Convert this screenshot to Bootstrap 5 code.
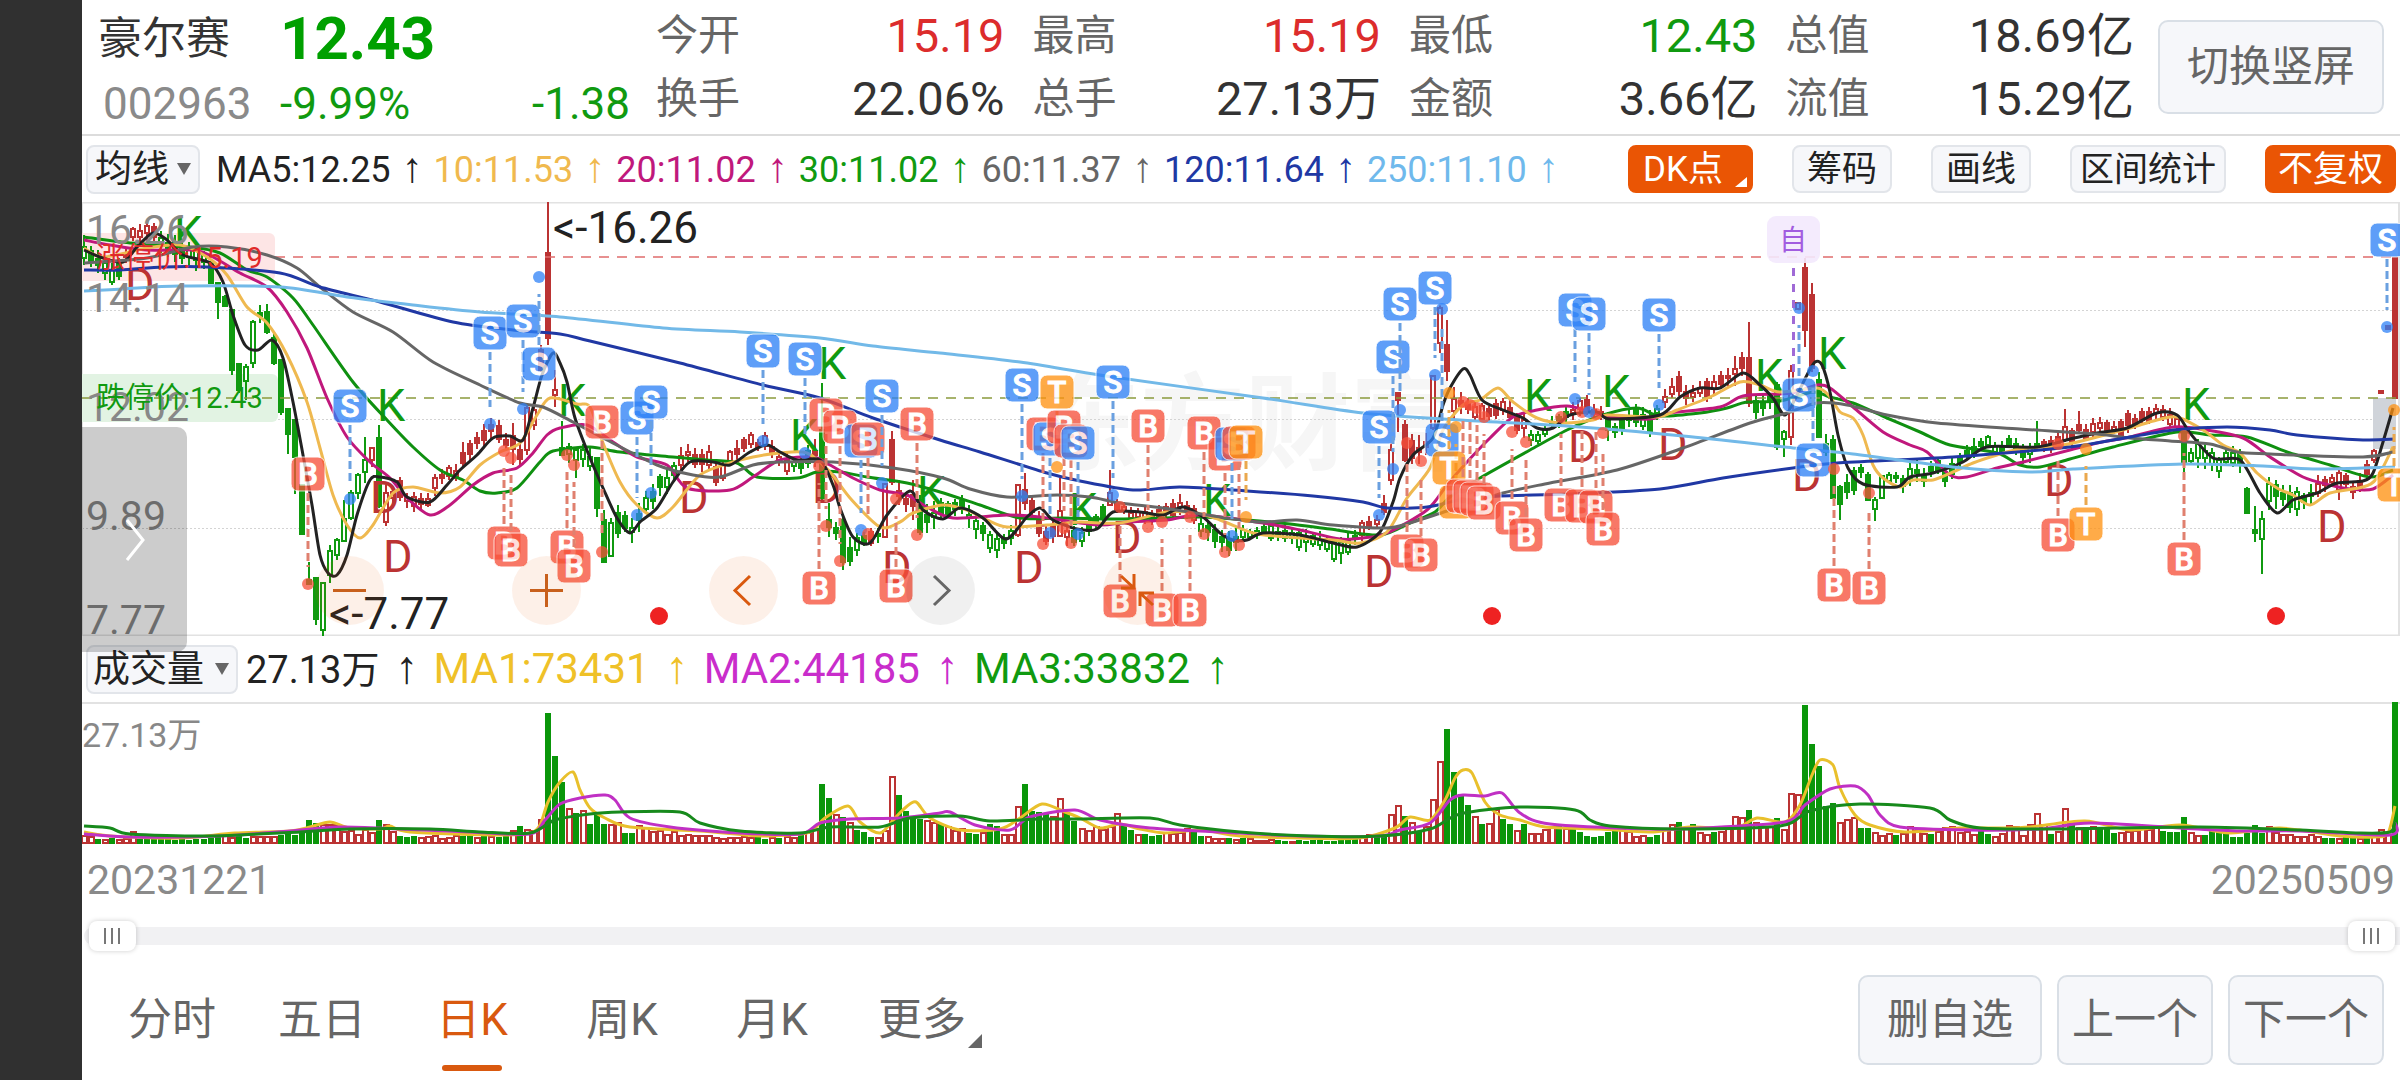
<!DOCTYPE html>
<html lang="zh-CN">
<head>
<meta charset="utf-8">
<meta name="viewport" content="width=device-width, initial-scale=1">
<title>豪尔赛 002963 日K</title>
<link href="https://cdn.jsdelivr.net/npm/bootstrap@5.3.0/dist/css/bootstrap.min.css" rel="stylesheet">
<style>
body{font-family:Roboto,"Noto Sans CJK SC",sans-serif;background:#fff;color:#333;line-height:1}
.side-strip{width:82px;background:#303030}
.quote-head{height:136px;border-bottom:2px solid #dcdcdc;padding:0 16px 0 16px}
.stock-id{width:532px;margin-right:26px}
.stock-name{font-size:44px;width:182px}
.stock-code{font-size:44px;width:182px;color:#8a8a8a;padding-left:5px}
.last-price{font-size:60px;font-weight:700;line-height:62px;color:#00a000}
.chg{font-size:44px}
.up-c{color:#dc2c2c}.dn-c{color:#109a10}
.qgrid{gap:0 28px}
.qrow{height:63px}
.qlabel{font-size:42px;color:#666}
.qval{font-size:47px}
.soft-btn{background:#f6f7fa;border:2px solid #d9dfe6;color:#666;font-size:42px;border-radius:10px;line-height:1;padding:0 13px}
.wide-btn{padding:0 27px}
.head-btn{height:94px}
.tool-row{height:66px;padding:0 4px 0 4px}
.pick{position:relative;height:49px;background:#f6f7fa;border:2px solid #e2e5ea;border-radius:8px}
.pick select{appearance:none;border:0;background:none;color:#222;font-size:37px;height:45px;line-height:45px;padding:0 29px 0 7px;outline:0}
.pick .pick-vol{padding:0 32px 0 5px}
.pick::after{content:"";position:absolute;right:7px;top:16px;border:7px solid transparent;border-top:12px solid #666;border-bottom:0;pointer-events:none}
.ma-txt{font-size:36px;white-space:nowrap}
.ma-txt i,.vol-txt i{font-family:"Liberation Sans",sans-serif;font-style:normal;font-size:42px;line-height:36px;display:inline-block;text-align:center;width:43px}
.vol-txt{font-size:42px;white-space:nowrap}
.vol-txt i{width:54px;font-size:46px}
.vol-now{font-size:38px}
.tag-row{gap:39px}
.tag-btn{height:48px;font-size:35px;line-height:1;padding:0 13px;background:#f6f7fa;border:2px solid #e2e5ea;border-radius:8px;color:#222}
.tag-long{padding:0 8px;font-size:34px}
.tag-tight{padding:0 11px}
.tag-on{background:#ea5504;border-color:#ea5504;color:#fff;position:relative}
.tag-dk{padding-right:28px}
.tag-dk::after{content:"";position:absolute;right:4px;bottom:4px;border-left:12px solid transparent;border-bottom:10px solid #fff}
svg{display:block}
.chart-svg{width:100%;height:auto}
.drawer-btn{position:absolute;left:0;top:225px;width:105px;height:225px;border:0;border-radius:0 10px 10px 0;background:rgba(0,0,0,.2);z-index:2;padding:0 0 0 14px}
.zoom-bar{position:absolute;left:233px;top:354px;gap:128px}
.round-btn{width:69px;height:69px;border:0;border-radius:50%;background:rgba(234,85,4,.09);padding:0}
.round-btn:disabled{background:rgba(0,0,0,.06)}
.date-row{height:76px;font-size:41px;color:#8a8a8a;padding:15px 5px 0 5px}
.span-wrap{position:relative;height:30px}
.span-wrap::before{content:"";position:absolute;left:2px;right:0;top:6px;height:18px;border-radius:9px 0 0 9px;background:#f1f1f3}
.span-wrap input{appearance:none;position:absolute;left:7px;width:calc(100% - 12px);height:30px;background:none;margin:0;pointer-events:none}
.span-wrap input::-webkit-slider-thumb{appearance:none;pointer-events:auto;width:47px;height:30px;border:0;border-radius:8px;box-shadow:0 0 5px rgba(0,0,0,.2);background:linear-gradient(90deg,#777 2px,transparent 2px 7px,#777 7px 9px,transparent 9px 14px,#777 14px) 15px 7px/16px 16px no-repeat #fff}
.foot-row{margin-top:24px;padding:0 16px 0 15px}
.foot-btns{gap:15px}
.tab-a{width:150px;text-align:center;font-size:44px;color:#666;text-decoration:none;line-height:90px;position:relative}
.tab-a.active{color:#d9590f}
.tab-a.active::after{content:"";position:absolute;left:45px;width:60px;height:6px;border-radius:3px;bottom:-6px;background:#d9590f}
.tab-more::after{content:"";position:absolute;right:15px;bottom:17px;border-left:14px solid transparent;border-bottom:14px solid #666}
.foot-row .soft-btn{height:90px}
</style>
</head>
<body class="d-flex min-vh-100">
<aside class="side-strip flex-shrink-0"></aside>
<main class="flex-grow-1 overflow-hidden">
  <header class="quote-head d-flex">
    <div class="stock-id flex-shrink-0">
      <div class="d-flex align-items-center pt-2"><span class="stock-name">豪尔赛</span><span class="last-price">12.43</span></div>
      <div class="d-flex align-items-center pt-2 mt-1"><span class="stock-code">002963</span><span class="chg dn-c">-9.99%</span><span class="chg dn-c ms-auto">-1.38</span></div>
    </div>
    <div class="qgrid row row-cols-4 flex-grow-1 flex-nowrap g-0 pt-1">
      <div class="flex-fill w-25"><div class="qrow d-flex justify-content-between align-items-center"><span class="qlabel">今开</span><span class="qval up-c">15.19</span></div><div class="qrow d-flex justify-content-between align-items-center"><span class="qlabel">换手</span><span class="qval">22.06%</span></div></div>
      <div class="flex-fill w-25"><div class="qrow d-flex justify-content-between align-items-center"><span class="qlabel">最高</span><span class="qval up-c">15.19</span></div><div class="qrow d-flex justify-content-between align-items-center"><span class="qlabel">总手</span><span class="qval">27.13万</span></div></div>
      <div class="flex-fill w-25"><div class="qrow d-flex justify-content-between align-items-center"><span class="qlabel">最低</span><span class="qval dn-c">12.43</span></div><div class="qrow d-flex justify-content-between align-items-center"><span class="qlabel">金额</span><span class="qval">3.66亿</span></div></div>
      <div class="flex-fill w-25"><div class="qrow d-flex justify-content-between align-items-center"><span class="qlabel">总值</span><span class="qval">18.69亿</span></div><div class="qrow d-flex justify-content-between align-items-center"><span class="qlabel">流值</span><span class="qval">15.29亿</span></div></div>
    </div>
    <button type="button" class="soft-btn wide-btn head-btn align-self-center flex-shrink-0 ms-4">切换竖屏</button>
  </header>

  <section class="tool-row d-flex align-items-center">
    <label class="pick me-3" aria-label="主图指标"><select><option>均线</option></select></label>
    <div class="ma-txt d-flex">
      <span style="color:#222">MA5:12.25<i>↑</i></span><span style="color:#f0b94e">10:11.53<i>↑</i></span><span style="color:#c0187c">20:11.02<i>↑</i></span><span style="color:#109a10">30:11.02<i>↑</i></span><span style="color:#666">60:11.37<i>↑</i></span><span style="color:#2038a4">120:11.64<i>↑</i></span><span style="color:#6fb9ec">250:11.10<i>↑</i></span>
    </div>
    <div class="tag-row d-flex ms-auto">
      <button type="button" class="tag-btn tag-on tag-dk">DK点</button>
      <button type="button" class="tag-btn">筹码</button>
      <button type="button" class="tag-btn">画线</button>
      <button type="button" class="tag-btn tag-long">区间统计</button>
      <button type="button" class="tag-btn tag-on tag-tight">不复权</button>
    </div>
  </section>

  <section class="position-relative">
    <svg id="price" class="chart-svg" viewBox="82 202 2318 434" role="img" aria-label="日K线图"></svg>
    <div class="zoom-bar d-flex">
      <button type="button" class="round-btn" aria-label="缩小"><svg width="69" height="69"><path d="M18 34.500H51" stroke="#c8601c" stroke-width="3"/></svg></button>
      <button type="button" class="round-btn" aria-label="放大"><svg width="69" height="69"><path d="M18 34.500H51M34.500 18V51" stroke="#c8601c" stroke-width="3"/></svg></button>
      <button type="button" class="round-btn" aria-label="左移"><svg width="69" height="69"><path d="M41 20L26 34.500L41 49" fill="none" stroke="#d9590f" stroke-width="3"/></svg></button>
      <button type="button" class="round-btn" disabled aria-label="右移"><svg width="69" height="69"><path d="M28 20L43 34.500L28 49" fill="none" stroke="#666" stroke-width="3"/></svg></button>
      <button type="button" class="round-btn" aria-label="收起"><svg width="69" height="69"><path d="M18 20L31 32M18 32H31V18M50 49L37 37M51 37H37V50" fill="none" stroke="#d9590f" stroke-width="3"/></svg></button>
    </div>
    <button type="button" class="drawer-btn" aria-label="展开"><svg width="60" height="46" viewBox="0 0 60 46"><path d="M31 3L47 23L31 43" fill="none" stroke="#fff" stroke-width="3"/></svg></button>
  </section>

  <section class="tool-row d-flex align-items-center">
    <label class="pick me-2" aria-label="副图指标"><select class="pick-vol"><option>成交量</option></select></label>
    <div class="vol-txt d-flex align-items-center">
      <span class="vol-now" style="color:#222">27.13万<i>↑</i></span><span style="color:#efc128">MA1:73431<i>↑</i></span><span style="color:#c92dcb">MA2:44185<i>↑</i></span><span style="color:#109a10">MA3:33832<i>↑</i></span>
    </div>
  </section>
  <svg id="volume" class="chart-svg" viewBox="82 702 2318 143" role="img" aria-label="成交量图"></svg>

  <div class="date-row d-flex justify-content-between"><span>20231221</span><span>20250509</span></div>
  <div class="span-wrap"><input type="range" value="0" aria-label="起始"><input type="range" value="100" aria-label="结束"></div>

  <footer class="foot-row d-flex">
    <nav class="d-flex" aria-label="周期">
      <a class="tab-a" href="#">分时</a><a class="tab-a" href="#">五日</a><a class="tab-a active" href="#">日K</a><a class="tab-a" href="#">周K</a><a class="tab-a" href="#">月K</a><a class="tab-a tab-more" href="#">更多</a>
    </nav>
    <div class="foot-btns d-flex ms-auto">
      <button type="button" class="soft-btn wide-btn">删自选</button>
      <button type="button" class="soft-btn">上一个</button>
      <button type="button" class="soft-btn">下一个</button>
    </div>
  </footer>
</main>
<script src="https://cdn.jsdelivr.net/npm/bootstrap@5.3.0/dist/js/bootstrap.bundle.min.js"></script>
<script>
const RED='#bb3333',GRN='#109a10';
const nums=s=>s.trim().split(/\s+/).map(p=>p.split(',').map(v=>isNaN(v)?v:+v));
// smooth path through "x,y x,y ..."
function curve(s){
  const p=nums(s);let d=`M${p[0]}`;
  for(let i=0;i<p.length-1;i++){
    const a=p[i-1]||p[i],b=p[i],c=p[i+1],e=p[i+2]||c;
    d+=`C${b[0]+(c[0]-a[0])/7},${b[1]+(c[1]-a[1])/7} ${c[0]-(e[0]-b[0])/7},${c[1]-(e[1]-b[1])/7} ${c}`;
  }
  return d;
}
const line=(s,c,w=3)=>`<path d="${curve(s)}" fill="none" stroke="${c}" stroke-width="${w}" stroke-linejoin="round"/>`;
let seed=7;const rnd=()=>(seed=(seed*16807)%2147483647)/2147483647;
const N=330,X=i=>2395-(N-1-i)*7.024;

// calm stretches: x, middle, half range, colour
const calm=nums(`84,252,12,g 100,262,10,g 110,274,9,g 120,268,10,g 128,252,8,r 133,235,7,r 140,232,7,r 153,232,10,r 162,244,11,g 180,250,11,g 207,262,10,g
393,496,10,r 400,487,10,r 407,499,8,r 413,505,9,r 420,500,9,r 427,501,8,r 434,487,9,r 441,475,7,r 448,473,7,r 455,475,7,r 462,458,12,r 470,449,8,r 477,442,7,r 484,436,9,r 491,427,11,r 498,432,9,r 505,440,9,r 512,443,18,r 519,455,12,r
567,452,8,g 581,457,11,g 588,456,10,g 617,520,14,g 624,522,8,g 631,534,14,g 638,522,14,g 645,504,9,g 652,498,11,g 659,488,12,g 666,480,13,g 673,474,11,g 680,462,10,r 687,455,12,r 694,456,8,r 701,459,9,r 708,455,13,r 715,474,11,r 722,472,9,r 729,459,9,r 736,452,9,r 743,444,9,r 750,438,8,r 757,444,6,r 764,441,8,r 771,448,8,r 778,456,8,r 785,462,10,r 792,464,8,g 799,466,8,g 806,458,8,g 813,446,12,r
833,525,9,g 847,552,14,g 854,550,11,g 861,540,9,g 868,535,7,r 875,541,8,g 896,486,11,r 903,497,8,r 924,520,11,g 931,520,18,g 938,508,12,g 945,509,8,g 952,508,8,g 959,503,7,g 966,510,10,g 973,525,12,g 980,531,12,g 987,536,11,g 994,547,12,g 1001,547,8,g 1008,539,8,g
1029,504,10,r 1036,512,9,r 1043,534,12,r 1050,535,9,r 1064,528,9,r 1071,538,10,g 1078,538,9,g 1085,533,7,g 1092,524,8,g 1099,519,9,g 1106,510,8,g 1120,506,6,r 1127,513,7,r 1140,517,8,r 1150,517,8,r 1160,513,9,r 1170,509,8,r 1180,505,8,r 1190,510,7,r 1197,518,9,r 1204,530,9,g 1211,531,9,g 1225,545,10,g 1232,540,12,g 1245,532,7,g 1255,535,6,g 1265,528,7,g 1275,531,8,g 1290,537,7,g 1302,540,10,g 1315,537,7,g 1330,545,9,g 1337,552,12,g 1345,548,11,g 1356,537,7,g 1364,530,9,r 1370,524,7,r 1378,519,6,r 1385,502,13,r
1413,445,12,r 1420,452,13,r 1428,443,14,r 1456,400,14,r 1463,403,8,r 1470,407,8,r 1477,409,8,r 1487,415,7,r 1500,407,11,r 1507,405,10,r 1515,422,10,r 1522,424,10,r 1529,438,10,g 1537,439,8,g 1545,430,7,g 1552,424,8,g 1560,420,8,g 1568,414,8,g 1575,411,9,r 1582,405,8,r 1590,408,9,r 1600,412,8,r 1613,430,9,g 1625,422,8,g 1640,414,10,g 1652,424,12,g 1658,412,7,g 1664,399,9,r 1674,386,10,r 1681,382,11,r 1688,400,10,r 1700,388,9,r 1710,388,10,r 1717,382,9,r 1725,378,8,r 1735,370,12,r 1743,365,12,r 1757,410,14,g 1764,405,12,g 1771,400,9,g
1828,445,12,g 1849,490,14,g 1856,478,10,g 1863,471,7,g 1891,478,6,g 1898,478,7,g 1905,484,8,g 1912,470,11,g 1919,470,9,g 1926,478,7,g 1933,467,7,g 1940,467,9,g 1947,476,9,g 1955,464,9,g 1962,458,8,g 1970,449,9,g 1980,443,8,g 1990,444,7,g 2000,451,7,g 2010,441,7,g 2017,449,11,g 2025,454,8,g 2033,449,9,g 2047,444,6,r 2055,441,8,r 2072,435,8,r 2086,431,10,r 2100,428,8,r 2110,429,7,r 2120,428,9,r 2130,422,10,r 2140,418,8,r 2150,416,8,r 2157,410,7,r 2165,416,8,r 2175,419,8,r
2191,457,9,g 2198,455,12,g 2205,456,12,g 2212,459,9,g 2219,470,10,g 2227,456,10,g 2234,457,8,g 2240,460,9,g 2268,494,16,g 2275,495,12,g 2285,494,8,g 2296,503,14,g 2303,500,9,g 2310,494,8,g 2317,486,10,r 2325,484,9,r 2332,479,6,r 2338,484,14,r 2345,481,7,r 2352,489,10,r 2360,482,9,r 2367,470,8,r`);
// wide bars: x, high, low, body top, body bottom, kind (capital = filled)
const wide=nums(`211,262,283,262,283,G 217,283,319,283,302,G 224,295,307,297,306,G 232,310,375,310,370,G 239,364,393,364,390,G 246,364,400,367,381,g 253,320,368,322,363,g 260,305,323,313,316,G 266,304,334,312,332,G 274,334,365,338,363,G 281,360,415,360,412,G 288,409,454,409,434,G 294,420,494,420,457,G 302,485,534,485,534,G 308,562,585,580,584,G 316,578,625,578,619,G 323,582,636,583,630,g 330,545,583,551,575,g 337,538,560,540,555,g 344,500,542,519,541,g 351,490,520,493,518,g 358,473,499,475,493,g 365,437,483,460,472,g 372,447,467,448,460,r 379,425,508,438,506,G 386,485,526,493,522,r
526,405,455,408,450,r 532,407,430,410,425,r 539,345,372,350,370,R 546,202,345,253,338,R 553,370,407,390,395,r 560,421,455,448,455,G 574,447,478,450,460,g 595,458,517,458,508,G 602,510,562,520,562,G 610,518,556,523,556,g 819,383,500,430,498,G 826,503,537,520,527,G 840,516,570,520,562,G 882,483,538,484,537,r 889,431,485,440,482,R 910,480,520,495,506,R 917,495,535,500,532,G 1015,484,537,485,535,r 1022,473,510,490,503,R 1057,478,537,511,536,r 1113,470,506,493,505,r 1392,443,485,450,480,r 1399,392,432,393,400,R 1406,420,462,425,460,R 1435,375,430,376,428,r 1442,305,353,308,343,r 1449,320,381,345,371,R
1606,412,441,414,430,G 1750,322,407,358,403,R 1779,382,450,385,447,G 1786,430,457,432,439,g 1793,365,445,371,437,r 1800,303,310,303,309,r 1807,258,347,268,330,R 1814,283,372,295,368,R 1821,372,437,380,437,G 1835,435,498,440,498,G 1842,485,520,487,504,G 1870,472,501,475,500,G 1877,497,521,500,509,g 1884,475,498,476,498,g 2040,421,450,444,447,G 2065,409,442,427,440,r 2079,411,434,425,430,R 2184,431,472,432,462,G 2247,487,513,489,513,G 2254,506,542,530,533,G 2261,511,574,519,539,g 2374,449,463,451,460,r 2381,391,393,391,393,R 2388,326,329,326,329,R 2395,258,398,258,398,R`);
function bar(x,h,l,t,b,k){
  const c=/r/i.test(k)?RED:GRN,solid=k<'a';x=Math.round(x);
  return `<path d="M${x} ${h}V${solid?l:t}M${x} ${b}V${l}" stroke="${c}" stroke-width="2"/><rect x="${x-2}" y="${t}" width="4" height="${Math.max(b-t,2)}" fill="${solid?c:'#fff'}" stroke="${c}" stroke-width="2"/>`;
}
let bars='';
for(let i=0;i<N;i++){
  const x=X(i),w=wide.find(e=>Math.abs(e[0]-x)<3.55);
  if(w){bars+=bar(x,...w.slice(1));continue}
  let j=calm.findIndex(e=>e[0]>x);if(j<1)j=1;
  const a=calm[j-1],b=calm[j],f=Math.min(1,Math.max(0,(x-a[0])/(b[0]-a[0])));
  const m=a[1]+(b[1]-a[1])*f+rnd()*4-2,r=(a[2]+(b[2]-a[2])*f)*(.8+rnd()*.5);
  const col=f<.5?a[3]:b[3],k=rnd()<.5?col:col.toUpperCase();
  bars+=bar(x,Math.round(m-r),Math.round(m+r),Math.round(m-r*(.1+rnd()*.6)),Math.round(m+r*(.1+rnd()*.6)),k);
}
const ma=[
['84,237 130,243 190,247 220,253 247,270 267,277 293,298 313,325 353,382 387,420 413,447 440,470 463,480 480,491 497,493 517,488 540,462 553,451 590,447 620,452 673,457 707,460 737,463 757,477 797,478 817,472 840,472 867,477 907,483 940,492 980,505 1020,518 1063,518 1113,519 1163,518 1200,517 1247,520 1290,524 1330,529 1380,535 1410,523 1435,512 1450,497 1480,478 1530,450 1567,430 1603,415 1637,408 1660,416 1700,413 1727,408 1747,402 1780,401 1813,392 1830,397 1853,403 1887,418 1920,432 1950,445 1997,453 2020,465 2040,467 2070,459 2113,447 2177,432 2210,435 2247,437 2287,452 2330,465 2370,477 2393,470','#0f9010'],
['84,240 110,245 147,250 193,250 213,257 240,273 267,287 287,312 307,348 327,398 347,437 370,462 390,478 407,498 430,515 450,505 473,485 493,473 517,468 533,453 547,435 560,428 587,425 613,442 637,457 667,465 687,488 730,490 753,477 780,460 813,457 830,465 853,478 880,490 907,495 927,507 953,518 1007,515 1040,517 1097,525 1127,522 1167,520 1200,515 1263,523 1300,530 1340,539 1363,538 1387,533 1427,510 1447,485 1467,462 1490,438 1513,417 1537,410 1567,406 1590,412 1610,417 1650,419 1670,413 1720,407 1743,396 1780,394 1797,392 1817,385 1830,388 1853,407 1883,432 1910,445 1927,452 1950,475 1967,477 1997,468 2027,461 2070,450 2097,443 2130,437 2173,427 2207,430 2243,438 2270,457 2303,477 2330,485 2350,489 2373,489 2393,475','#c0187c'],
['84,248 103,257 147,248 180,245 207,257 227,275 247,307 267,323 287,355 307,402 320,448 333,495 347,525 360,538 373,525 393,493 413,487 440,493 460,487 480,465 500,452 520,443 537,415 550,398 577,404 590,407 603,443 620,482 637,505 657,518 673,507 700,475 730,463 753,457 780,453 807,453 830,472 850,498 880,527 900,522 913,513 943,505 967,510 987,520 1007,527 1047,525 1080,522 1120,523 1167,512 1197,513 1220,520 1253,533 1287,537 1333,540 1360,543 1387,532 1407,498 1430,468 1443,430 1463,405 1480,400 1498,388 1513,402 1537,418 1563,423 1593,420 1607,415 1657,417 1677,410 1710,397 1740,382 1760,385 1780,392 1817,388 1830,397 1840,412 1853,418 1863,435 1873,465 1883,478 1900,487 1913,480 1933,480 1953,472 1973,463 1997,455 2020,449 2063,445 2097,437 2130,428 2157,420 2177,417 2203,430 2223,445 2240,453 2257,473 2277,488 2293,495 2310,505 2330,493 2363,487 2377,478 2393,447','#efb950'],
['84,250 100,257 123,262 137,247 153,233 167,240 183,255 210,263 223,282 233,315 245,345 258,350 272,340 283,358 293,402 303,455 312,505 320,555 328,573 337,575 347,555 357,515 370,480 380,477 397,482 407,497 430,502 447,485 460,470 477,455 493,438 510,436 523,440 533,408 542,375 553,353 560,363 567,382 575,418 590,458 603,488 617,518 630,533 640,522 657,508 673,482 690,462 713,462 730,465 750,452 767,445 780,452 797,460 820,460 833,485 840,508 853,537 870,543 887,515 910,491 923,510 943,519 960,508 983,518 1006,539 1027,517 1040,508 1053,520 1077,529 1097,529 1113,512 1140,512 1163,515 1183,507 1203,517 1220,533 1233,540 1247,540 1263,533 1300,535 1333,543 1357,547 1380,532 1393,502 1400,478 1413,455 1433,438 1443,405 1450,388 1463,369 1470,375 1482,400 1503,410 1523,418 1537,428 1553,428 1570,415 1597,412 1610,419 1660,415 1680,397 1700,388 1720,388 1743,373 1760,385 1773,398 1785,415 1797,395 1807,375 1815,362 1822,365 1830,392 1838,435 1848,468 1863,484 1897,487 1910,477 1933,473 1963,462 1987,447 2037,447 2070,439 2097,433 2127,428 2157,413 2177,415 2190,433 2213,458 2240,460 2260,493 2277,513 2293,500 2317,493 2337,483 2363,481 2373,473 2383,442 2393,408','#222'],
['84,263 147,258 193,247 227,247 267,255 297,268 320,287 353,312 393,332 433,362 480,385 520,403 543,407 573,422 607,440 657,465 693,475 720,477 753,465 780,462 833,462 893,468 943,478 970,489 1007,497 1057,495 1090,497 1120,503 1163,508 1207,515 1257,522 1297,520 1333,525 1387,528 1413,522 1447,511 1503,493 1550,483 1617,470 1683,448 1750,423 1787,413 1817,403 1847,405 1887,415 1937,423 2020,429 2097,434 2130,438 2170,441 2210,444 2237,452 2270,454 2363,457 2393,452','#666'],
['84,270 120,270 163,267 207,267 280,273 320,287 380,302 453,322 513,330 560,334 590,341 680,363 763,385 820,398 873,418 940,440 980,452 1047,473 1080,481 1133,490 1180,487 1247,491 1313,496 1363,502 1387,508 1427,507 1460,500 1500,496 1570,494 1660,489 1723,478 1793,468 1837,463 1953,457 2070,447 2113,440 2173,430 2227,427 2270,430 2297,435 2363,440 2395,439','#2038a4'],
['84,291 123,289 180,286 280,287 347,297 413,305 480,312 560,317 663,328 740,332 820,338 873,346 940,353 1020,362 1113,377 1263,398 1363,413 1460,420 1567,426 1683,436 1793,448 1853,454 1953,467 2030,472 2073,469 2183,464 2263,466 2313,469 2395,467','#72b9e8']];
// trade flags: kind, x, flag centre y, price dot y
const flags=nums(`B,308,474,584 S,350,406,499 S,490,333,424 S,523,321,409 S,539,364,277 B,504,543,451 B,511,550,458 B,567,547,455 B,574,566,465 B,602,422,552 S,637,418,515 S,651,402,493 S,763,351,441 S,805,359,453 B,826,415,526 B,840,427,561 S,861,441,530 B,868,439,534 S,882,396,483 B,917,424,535 B,819,588,466 B,896,586,499
S,1022,385,496 T,1057,392,467 B,1043,434,544 S,1050,439,533 B,1064,427,528 B,1071,441,543 S,1078,443,534 S,1113,382,495 B,1148,426,527 B,1204,433,534 B,1225,454,552 S,1232,444,536 B,1239,443,545 T,1246,442,517 B,1120,601,507 B,1162,610,522 B,1190,610,517 S,1379,427,515 S,1393,357,469 S,1400,304,410 S,1435,288,375 S,1442,440,309 T,1456,502,427 T,1449,468,393 B,1407,551,443 B,1421,555,461 B,1463,496,402 B,1470,497,405 B,1477,499,408 B,1484,503,417 B,1512,518,432 B,1526,535,442 B,1561,505,417 B,1582,506,412 B,1596,507,414 B,1603,529,433 S,1575,310,399 S,1589,314,412 S,1659,315,405
S,1799,395,308 S,1813,460,371 B,1834,585,469 B,1869,588,493 B,2058,535,444 T,2086,524,449 B,2184,559,436 S,2387,240,327 T,2394,485,410`);
const fc={S:['#2f82f7','#6aa0e0'],B:['#f7503a','#e0806f'],T:['#ff9212','#eaa84e']};
let fl='';
for(const [k,x,y,d] of flags){
  const dn=d>y,a=dn?y+19:y-19,b=dn?d-17:d+17;
  fl+=`<path d="M${x} ${a}V${b}" stroke="${fc[k][1]}" stroke-width="3" stroke-dasharray="8 4"/><circle cx="${x}" cy="${d}" r="6" fill="${fc[k][0]}" opacity=".75"/>`
   +`<g opacity=".77"><rect x="${x-17}" y="${y-17}" width="34" height="34" rx="7" fill="${fc[k][0]}" stroke="#fff" stroke-width="1"/><text x="${x}" y="${y+11}" text-anchor="middle" font-size="31" font-weight="500" fill="#fff" stroke="#fff" stroke-width="1">${k}</text></g>`;
}
const letter=(s,k,c,dx)=>nums(s).map(p=>`<text x="${p[0]-dx}" y="${p[1]}" fill="${c}" font-size="45">${k}</text>`).join('');
const lab=(x,y,t,c,s)=>`<text x="${x}" y="${y}" fill="${c}" font-size="${s}">${t}</text>`;
price.innerHTML=
 `<text x="1035" y="461" font-size="105" font-weight="700" fill="#f6f6f6">东方财富</text>`
 +[310.5,419.5,528.5].map(y=>`<path d="M82 ${y}H2398" stroke="#d4d4d4" stroke-dasharray="2 2"/>`).join('')
 +`<path d="M82 202.500H2399V635.500H82Z" fill="none" stroke="#e2e2e2" stroke-width="2"/>`
 +`<rect x="2373" y="398" width="23" height="51" fill="#d0d4da"/>`
 +`<rect x="76" y="233" width="199" height="48" rx="6" fill="#fde5e5"/><rect x="76" y="374" width="202" height="48" rx="6" fill="#e2f3e3"/>`
 +bars
 +`<path d="M275 257H2398" stroke="#e06c6c" stroke-width="1.500" stroke-dasharray="10 8"/><path d="M82 398H2398" stroke="#8a9a3c" stroke-width="1.500" stroke-dasharray="10 8"/>`
 +letter('183,248 386,421 567,416 827,379 799,451 926,508 1078,525 1212,516 1533,411 1611,407 1764,391 1827,369 2191,420','K',GRN,9)
 +letter('131,300 389,572 376,513 685,513 818,503 888,583 1020,583 1118,553 1370,587 1574,462 1664,460 1798,491 2050,496 2323,542','D',RED,6)
 +ma.map(m=>line(m[0],m[1])).join('')
 +lab(86,244,'16.26','#888',41)+lab(86,312,'14.14','#888',41)+lab(86,421,'12.02','#888',41)+lab(86,530,'9.89','#888',41)+lab(86,634,'7.77','#888',41)
 +lab(96,268,'涨停价:15.19','#e02a2a',29)+lab(96,408,'跌停价:12.43','#109a10',29)
 +fl
 +`<path d="M1793.500 268V375" stroke="#a06ad6" stroke-width="3" stroke-dasharray="8 8"/><rect x="1767" y="216" width="53" height="47" rx="9" fill="#f3e9fd" opacity=".9"/><text x="1793" y="250" text-anchor="middle" font-size="28" fill="#a25ce0">自</text>`
 +[659,1492,2276].map(x=>`<circle cx="${x}" cy="616" r="9" fill="#ee2222"/>`).join('')
 +lab(553,243,'&lt;-16.26','#222',44)+lab(329,629,'&lt;-7.77','#222',44);

// volume: x, height, colour; ranges in between are interpolated
const vol=nums(`84,9,r 100,5,g 128,6,r 134,13,r 141,5,g 200,5,g 218,10,g 250,8,r 280,9,g 301,14,g 308,24,g 315,21,g 322,20,r 350,14,r 373,12,r 380,24,g 386,20,r 393,13,r 401,8,g 425,8,r 460,8,g 480,7,r 505,8,g 512,14,r 519,18,g 526,15,r 533,14,r 540,25,r 547,131,g 554,88,g 561,62,g 568,36,r 575,31,g 582,34,r 589,20,g 596,29,g 603,20,g 610,20,r 617,22,r 624,11,g 631,11,g 638,19,r 660,14,r 700,9,r 740,7,r 780,6,g 806,12,r 813,16,r 820,60,g 827,46,g 834,30,r 841,27,g 848,22,r 855,14,g 862,12,g 869,7,g 876,7,r 883,14,r 890,68,r 897,49,g 904,33,g 911,26,g 918,25,g 925,24,r 932,22,r 939,20,g 946,18,r 953,14,r 960,16,r 967,11,g 974,10,g 981,12,r 988,20,g 995,18,g 1002,10,r 1009,10,r 1016,38,r 1023,60,g 1030,33,g 1037,32,g 1044,30,g 1051,28,r 1058,46,r 1065,32,g 1072,23,g 1079,16,r 1100,15,r 1107,18,r 1114,31,r 1121,20,g 1128,14,g 1140,10,r 1150,8,g 1165,12,r 1185,16,r 1200,8,g 1220,6,r 1240,6,g 1260,4,r 1300,4,g 1340,4,g 1365,7,r 1372,10,r 1380,8,g 1387,20,r 1394,30,r 1401,39,r 1408,28,g 1415,22,r 1422,13,g 1429,18,r 1436,45,r 1442,83,r 1450,115,g 1457,72,g 1464,50,g 1471,39,g 1478,28,r 1485,20,g 1492,21,r 1499,35,r 1506,25,g 1513,20,g 1520,14,r 1527,20,g 1534,11,r 1550,18,r 1575,18,g 1590,8,g 1605,12,g 1620,15,r 1640,9,r 1655,9,g 1672,20,r 1690,20,g 1700,12,r 1715,12,g 1730,17,r 1737,28,r 1744,27,r 1751,34,g 1758,22,r 1765,18,r 1772,18,r 1779,26,g 1786,15,r 1793,51,r 1800,50,r 1807,139,g 1814,100,g 1821,78,g 1828,38,g 1835,41,g 1842,22,r 1849,25,r 1856,27,r 1863,16,g 1870,16,g 1877,12,r 1895,9,g 1911,18,r 1930,10,g 1953,18,r 1970,13,r 1990,10,g 2002,11,r 2009,19,r 2025,9,r 2037,31,r 2044,20,r 2051,10,g 2058,13,r 2065,36,r 2072,22,g 2080,17,r 2100,15,g 2120,12,r 2145,18,r 2170,12,g 2177,12,g 2184,27,g 2191,12,r 2205,9,g 2220,14,g 2235,7,g 2248,11,g 2255,19,g 2262,11,g 2269,18,r 2285,10,r 2320,8,r 2350,6,g 2374,8,r 2381,15,r 2388,10,r 2395,142,g`);
let vb='';
for(let i=0;i<N;i++){
  const x=X(i);let e=vol.find(v=>Math.abs(v[0]-x)<3.55),h,c;
  if(e){h=e[1];c=e[2]}
  else{const j=Math.max(1,vol.findIndex(v=>v[0]>x)),a=vol[j-1],b=vol[j],f=(x-a[0])/(b[0]-a[0]);
    h=Math.max(3,Math.round((a[1]+(b[1]-a[1])*f)*(.75+rnd()*.45)));c=rnd()<.6?a[2]:b[2]}
  const px=Math.round(x);
  vb+=c=='g'?`<rect x="${px-3}" y="${844-h}" width="6" height="${h}" fill="#0a960a"/>`:`<rect x="${px-2}" y="${845-h}" width="5" height="${h-2}" fill="#fff" stroke="#bb3333" stroke-width="2"/>`;
}
volume.innerHTML=`<path d="M82 703H2400" stroke="#e2e2e2" stroke-width="2"/>`+vb
 +line('84,832 110,836 180,838 235,833 290,831 310,827 330,822 350,828 380,829 390,826 410,832 500,835 530,833 540,825 548,802 560,782 573,772 580,790 590,808 605,818 630,827 700,831 760,836 800,834 812,831 825,818 848,806 860,822 880,833 895,818 905,808 916,802 930,818 960,830 1000,829 1020,818 1042,804 1065,812 1080,818 1100,828 1120,824 1140,829 1165,833 1200,830 1240,836 1300,838 1360,838 1395,828 1410,817 1430,820 1445,800 1455,778 1463,770 1472,773 1485,802 1500,815 1520,820 1545,827 1600,829 1650,832 1690,827 1735,828 1757,818 1785,822 1800,805 1812,775 1820,760 1833,765 1840,788 1855,815 1870,825 1905,832 1960,828 2000,828 2030,827 2085,821 2130,830 2180,825 2230,833 2280,828 2340,836 2375,837 2388,833 2395,806','#e9c02c')
 +line('84,834 130,837 220,836 290,831 340,827 400,829 470,832 530,834 545,820 560,804 580,798 605,795 615,800 630,818 670,827 740,833 800,834 820,823 850,819 900,818 940,813 950,812 975,825 1010,830 1030,817 1075,810 1100,820 1150,828 1240,833 1300,836 1380,836 1400,830 1430,823 1450,800 1463,795 1485,796 1502,793 1520,813 1550,824 1650,829 1700,828 1785,822 1805,805 1830,789 1855,786 1868,795 1880,815 1900,827 1970,830 2040,829 2090,823 2180,828 2240,831 2300,831 2390,835 2395,822','#c030c4')
 +line('84,826 110,828 130,834 210,836 300,832 350,829 430,829 480,832 530,833 555,820 590,814 620,812 680,812 700,823 740,831 800,833 830,827 880,827 910,818 960,816 990,821 1040,819 1080,819 1150,818 1180,825 1240,832 1310,836 1380,836 1430,829 1460,814 1520,807 1575,810 1590,820 1610,826 1680,829 1780,826 1810,811 1860,804 1930,808 1950,820 1980,828 2060,829 2200,827 2300,830 2360,833 2390,832 2395,822','#178a1c')
 +lab(82,747,'27.13万','#888',34);
</script>
</body>
</html>
